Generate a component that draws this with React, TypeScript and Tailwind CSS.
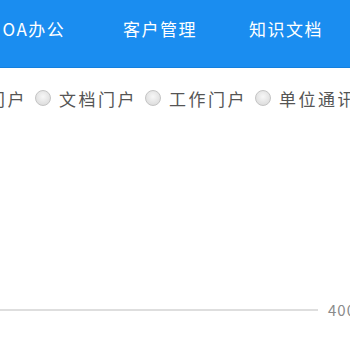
const navItems = ["OA办公", "客户管理", "知识文档"];
const portals = ["文档门户", "工作门户", "单位通讯录"];

function Radio() {
  return (
    <span className="inline-block w-[16px] h-[16px] shrink-0 rounded-full border border-[#c4c4c4] bg-[radial-gradient(circle_at_50%_40%,#f7f7f7,#d6d6d6)]" />
  );
}

export default function App() {
  return (
    <div
      className="w-[350px] h-[350px] overflow-hidden bg-white flex flex-col"
      style={{ fontFamily: '"Noto Sans CJK SC", "Liberation Sans", sans-serif' }}
    >
      {/* 顶部导航 */}
      <nav className="h-[68px] shrink-0 bg-[#1a8df0] border-b border-[#1480de] flex -ml-[29px] pt-[17px]">
        {navItems.map((item) => (
          <div key={item} className="w-[126px] shrink-0 flex justify-center">
            <span className="text-[17px] leading-[24px] tracking-[1.5px] text-white">{item}</span>
          </div>
        ))}
      </nav>

      {/* 门户选择 */}
      <div className="mt-[21px] h-[20px] flex items-center whitespace-nowrap text-[17px] leading-[20px] tracking-[2.5px] text-[#555] -ml-[12px]">
        <span>门户</span>
        {portals.map((p) => (
          <div key={p} className="flex items-center">
            <span className="ml-[8px] mr-[8px]">
              <Radio />
            </span>
            <span>{p}</span>
          </div>
        ))}
      </div>

      <div className="flex-1" />

      {/* 底部刻度 */}
      <div className="h-[20px] mb-[30px] flex items-center">
        <div className="w-[318px] shrink-0 h-[2px] bg-[#dedede]" />
        <span className="ml-[10px] shrink-0 text-[15px] leading-[20px] text-[#8a8a8a] tracking-[1px]">400</span>
      </div>
    </div>
  );
}
